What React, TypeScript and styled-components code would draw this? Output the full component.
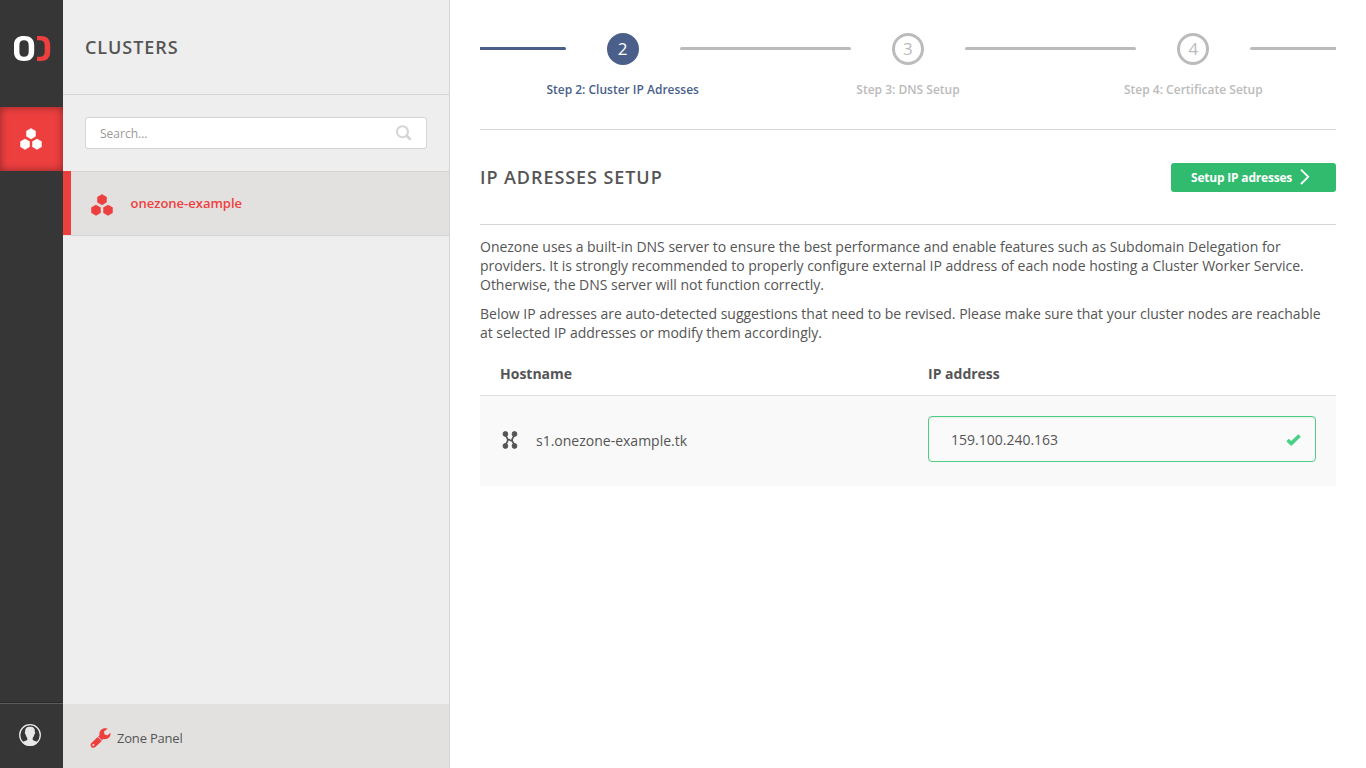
import React from "react";
import styled, { createGlobalStyle, css } from "styled-components";

const RED = "#ee3f3f";
const NAVY = "#4a5f89";
const MUTED = "#bbbbbb";
const LINE = "#d4d4d4";

const GlobalStyle = createGlobalStyle`
  *, *::before, *::after { box-sizing: border-box; }
  body {
    margin: 0;
    overflow: hidden;
    background: #fff;
    color: #555555;
    font: 14px/19px "Open Sans", sans-serif;
  }
`;

const Page = styled.div`
  display: flex;
  width: 100%;
  height: 100vh;
`;

const Rail = styled.nav`
  flex: 0 0 63px;
  display: flex;
  flex-direction: column;
  background: #363636;
`;

const Brand = styled.div`
  height: 107px;
  padding: 36px 0 0 14px;
  svg { display: block; }
`;

const RailItem = styled.a`
  height: 64px;
  display: flex;
  align-items: center;
  justify-content: center;
  padding: 0 2px 1px 0;
  color: #fff;
  background: ${RED};
  box-shadow: inset 0 0 8px rgba(0, 0, 0, 0.42);
`;

const RailUser = styled.a`
  height: 65px;
  margin-top: auto;
  border-top: 1px solid #5a5a5a;
  box-shadow: 0 -1px 0 #292929;
  padding: 20px 0 0 19px;
  svg { display: block; }
`;

const Sidebar = styled.aside`
  flex: 0 0 387px;
  display: flex;
  flex-direction: column;
  background: #eeeeee;
  border-right: 1px solid ${LINE};
`;

const headingText = css`
  margin: 0;
  font-size: 18px;
  font-weight: 600;
  line-height: 24px;
  letter-spacing: 0.93px;
  text-transform: uppercase;
`;

const SidebarTitle = styled.h1`
  ${headingText}
  height: 95px;
  padding: 35px 22px 0;
  border-bottom: 1px solid ${LINE};
`;

const SearchArea = styled.div`
  height: 76px;
  padding: 22px 22px 0;
`;

const SearchBox = styled.div`
  height: 32px;
  display: flex;
  align-items: center;
  justify-content: space-between;
  padding: 0 14px;
  background: #fff;
  border: 1px solid ${LINE};
  border-radius: 3px;
  color: #999;
  font-size: 12px;
`;

const ClusterRow = styled.a`
  height: 65px;
  display: flex;
  align-items: stretch;
  background: #e2e1df;
  color: ${RED};
  font-size: 13px;
  font-weight: 600;
`;

const ActiveMarker = styled.span`
  width: 8px;
  height: 64px;
  background: ${RED};
`;

const ClusterName = styled.div`
  flex: 1;
  display: flex;
  align-items: center;
  padding-left: 19.500px;
  border: solid ${LINE};
  border-width: 1px 0;
  svg { margin: 2px 18px 0 0; }
`;

const SidebarFooter = styled.footer`
  height: 64px;
  margin-top: auto;
  display: flex;
  align-items: center;
  padding: 4px 0 0 27px;
  gap: 6px;
  background: #e2e1df;
  font-size: 13px;
  letter-spacing: -0.2px;
  svg { margin-bottom: 1px; }
`;

const Main = styled.main`
  flex: 1;
  padding: 0 30px;
`;

const Steps = styled.ol`
  height: 130px;
  margin: 0;
  padding: 33px 0 0;
  display: grid;
  grid-template-columns: repeat(3, 1fr);
  list-style: none;
  border-bottom: 1px solid ${LINE};
`;

const Step = styled.li<{ $active?: boolean }>`
  color: ${(p) => (p.$active ? NAVY : MUTED)};
  text-align: center;
  font-size: 12px;
  font-weight: 600;
`;

const StepTrack = styled.div`
  height: 32px;
  display: flex;
  align-items: center;
  justify-content: space-between;
`;

const Segment = styled.span<{ $color: string; $side: "left" | "right" }>`
  width: 30%;
  height: 3px;
  margin-top: -1px;
  background: ${(p) => p.$color};
  border-radius: ${(p) => (p.$side === "left" ? "0 2px 2px 0" : "2px 0 0 2px")};
`;

const StepCircle = styled.span<{ $active?: boolean }>`
  width: 32px;
  height: 32px;
  border: 3px solid currentColor;
  border-radius: 50%;
  background: ${(p) => (p.$active ? NAVY : "transparent")};
  font-size: 17px;
  font-weight: 400;
  line-height: 26px;
`;

const StepNumber = styled.span<{ $active?: boolean }>`
  color: ${(p) => (p.$active ? "#fff" : MUTED)};
`;

const StepLabel = styled.div`
  margin-top: 15px;
`;

const SectionHeader = styled.header`
  height: 95px;
  display: flex;
  align-items: center;
  justify-content: space-between;
  border-bottom: 1px solid ${LINE};
`;

const SectionTitle = styled.h2`
  ${headingText}
`;

const SubmitButton = styled.button`
  width: 165px;
  height: 29px;
  display: flex;
  align-items: center;
  padding: 0 0 0 20px;
  gap: 8px;
  border: 0;
  border-radius: 3px;
  background: #30bb6e;
  color: #fff;
  font: 700 12px/17px "Open Sans", sans-serif;
  letter-spacing: -0.2px;
  svg { margin-bottom: 1px; }
`;

const Paragraph = styled.p`
  margin: 0 0 10px;
  white-space: nowrap;
  letter-spacing: -0.012px;
`;

const Intro = styled.section`
  padding-top: 12px;
`;

const HostTable = styled.div`
  margin-top: 11px;
`;

const TableHead = styled.div`
  height: 43px;
  display: grid;
  grid-template-columns: 1fr 1fr;
  padding-top: 11px;
  border-bottom: 1px solid #dddddd;
  font-weight: 700;
  span { padding-left: 20px; }
`;

const TableRow = styled.div`
  height: 90px;
  display: grid;
  grid-template-columns: 1fr 1fr;
  background: #f9f9f9;
`;

const HostCell = styled.div`
  display: flex;
  align-items: center;
  gap: 18px;
  padding: 0 0 2px 22px;
`;

const IpCell = styled.div`
  padding: 20px 20px 0;
`;

const IpField = styled.div`
  height: 46px;
  display: flex;
  align-items: center;
  justify-content: space-between;
  padding: 0 14px 0 22px;
  border: 1px solid #49d085;
  border-radius: 4px;
  background: #fafafa;
  box-shadow: inset 0 1px 1px rgba(0, 0, 0, 0.06);
  svg { margin-top: 1px; }
`;

const ClusterIcon = () => (
  <svg width="22" height="22" viewBox="0 0 22 22" fill="currentColor" stroke="currentColor" strokeWidth=".5" strokeLinejoin="round">
    <path d="M11 .5l4.500 2.600v5.200L11 10.900 6.500 8.300V3.100zM5 11l4.500 2.600v5.200L5 21.400.5 18.800v-5.200zM17 11l4.500 2.600v5.200L17 21.400l-4.500-2.600v-5.200z" />
  </svg>
);

const LogoIcon = () => (
  <svg width="37" height="26" viewBox="0 0 37 26">
    <path
      fill="#fff"
      fillRule="evenodd"
      d="M10 0c6.700 0 10.200 3.200 10.200 9.500v6c0 6.300-3.500 9.500-10.200 9.500S-.1 21.800-.1 15.500v-6C-.1 3.200 3.300 0 10 0zm0 4.200C6.800 4.200 5.400 5.900 5.400 9.300v6.400c0 3.400 1.400 5.100 4.600 5.100s4.700-1.700 4.700-5.100V9.300c0-3.400-1.500-5.100-4.700-5.100z"
    />
    <path fill={RED} d="M23 0h3.500C33 0 36.200 3 36.200 9.500v6c0 6.500-3.200 9.500-9.700 9.500H23v-4.200h2.200c3.800 0 5.500-1.500 5.500-5.300V9.500c0-3.800-1.700-5.300-5.500-5.300H23z" />
  </svg>
);

const UserIcon = () => (
  <svg width="22" height="22" viewBox="0 0 22 22">
    <circle cx="11" cy="11" r="10.300" fill="none" stroke="#e8e8e8" strokeWidth="1.300" />
    <path
      fill="#e8e8e8"
      d="M11 2.800c3.900 0 5 2 4.800 5 .8.700.3 2.300-.5 2.800-.3 1.700-.9 2.700-1.600 3.400v1.800c.8 1.300 3.600 1.200 5 2.600C16.800 20.700 14 22 11 22s-5.800-1.300-7.700-3.600c1.400-1.400 4.200-1.300 5-2.600V14c-.7-.7-1.300-1.700-1.600-3.400-.8-.5-1.300-2.100-.5-2.800C6 4.800 7.100 2.800 11 2.800z"
    />
  </svg>
);

const SearchIcon = () => (
  <svg width="16" height="16" viewBox="0 0 16 16" fill="none" stroke={LINE}>
    <circle cx="6.500" cy="6.700" r="5.500" strokeWidth="2" />
    <path d="M10.600 10.800l3.300 3.200" strokeWidth="2.600" strokeLinecap="round" />
  </svg>
);

const WrenchIcon = () => (
  <svg width="21" height="20" viewBox="0 0 21 20" fill={RED}>
    <path
      fillRule="evenodd"
      d="M17.600.7L14 3.500l.5 2.900 3 .9 3-2.500c.4 4.600-3.200 7.100-7.200 6.200L12 12.300 8.200 8.500l1.300-1.200C8.700 2.700 12.500-1 17.600.7zM7.700 8.900l4.100 4.100-6.400 6c-1.300 1.100-3 1-4-.1-1.200-1.200-1.200-2.800 0-4zM3.300 15.900a1 1 0 1 0 .1 2 1 1 0 0 0-.1-2z"
    />
  </svg>
);

const ChevronIcon = () => (
  <svg width="10" height="16" viewBox="0 0 10 16" fill="none" stroke="#fff" strokeWidth="1.800">
    <path d="M1 .7l7.200 7.100L1 15" />
  </svg>
);

const NodeIcon = () => (
  <svg width="16" height="18" viewBox="0 0 16 18" fill="#555" stroke="#555">
    <path d="M3.400 3c.3 3 2.400 3.500 2.400 6s-2.100 3-2.400 6M12.500 3c-.3 3-2.400 3.500-2.400 6s2.100 3 2.400 6M5.500 8.500h1.500l2 1.200h1.500" fill="none" strokeWidth="1.700" />
    <circle cx="3.400" cy="3" r="2.400" />
    <circle cx="12.500" cy="3" r="2.400" />
    <circle cx="3.400" cy="15" r="2.400" />
    <circle cx="12.500" cy="15" r="2.400" />
  </svg>
);

const CheckIcon = () => (
  <svg width="15" height="12" viewBox="0 0 15 12" fill="#49d085">
    <path d="M12.300.2l2.500 2.500-8.900 8.900H4.600L.3 7.200l2.500-2.500 2.400 2.200z" />
  </svg>
);

const steps = [
  { number: 2, label: "Step 2: Cluster IP Adresses", active: true },
  { number: 3, label: "Step 3: DNS Setup", active: false },
  { number: 4, label: "Step 4: Certificate Setup", active: false },
];

export default function App() {
  return (
    <>
      <GlobalStyle />
      <Page>
        <Rail>
          <Brand><LogoIcon /></Brand>
          <RailItem><ClusterIcon /></RailItem>
          <RailUser><UserIcon /></RailUser>
        </Rail>
        <Sidebar>
          <SidebarTitle>Clusters</SidebarTitle>
          <SearchArea>
            <SearchBox>
              <span>Search...</span>
              <SearchIcon />
            </SearchBox>
          </SearchArea>
          <ClusterRow>
            <ActiveMarker />
            <ClusterName>
              <ClusterIcon />
              <span>onezone-example</span>
            </ClusterName>
          </ClusterRow>
          <SidebarFooter>
            <WrenchIcon />
            <span>Zone Panel</span>
          </SidebarFooter>
        </Sidebar>
        <Main>
          <Steps>
            {steps.map((s) => (
              <Step key={s.number} $active={s.active}>
                <StepTrack>
                  <Segment $side="left" $color={s.active ? NAVY : MUTED} />
                  <StepCircle $active={s.active}>
                    <StepNumber $active={s.active}>{s.number}</StepNumber>
                  </StepCircle>
                  <Segment $side="right" $color={MUTED} />
                </StepTrack>
                <StepLabel>{s.label}</StepLabel>
              </Step>
            ))}
          </Steps>
          <SectionHeader>
            <SectionTitle>IP adresses setup</SectionTitle>
            <SubmitButton>
              Setup IP adresses
              <ChevronIcon />
            </SubmitButton>
          </SectionHeader>
          <Intro>
            <Paragraph>
              Onezone uses a built-in DNS server to ensure the best performance and enable features such as Subdomain Delegation for<br />
              providers. It is strongly recommended to properly configure external IP address of each node hosting a Cluster Worker Service.<br />
              Otherwise, the DNS server will not function correctly.
            </Paragraph>
            <Paragraph>
              Below IP adresses are auto-detected suggestions that need to be revised. Please make sure that your cluster nodes are reachable<br />
              at selected IP addresses or modify them accordingly.
            </Paragraph>
          </Intro>
          <HostTable>
            <TableHead>
              <span>Hostname</span>
              <span>IP address</span>
            </TableHead>
            <TableRow>
              <HostCell>
                <NodeIcon />
                <span>s1.onezone-example.tk</span>
              </HostCell>
              <IpCell>
                <IpField>
                  <span>159.100.240.163</span>
                  <CheckIcon />
                </IpField>
              </IpCell>
            </TableRow>
          </HostTable>
        </Main>
      </Page>
    </>
  );
}
